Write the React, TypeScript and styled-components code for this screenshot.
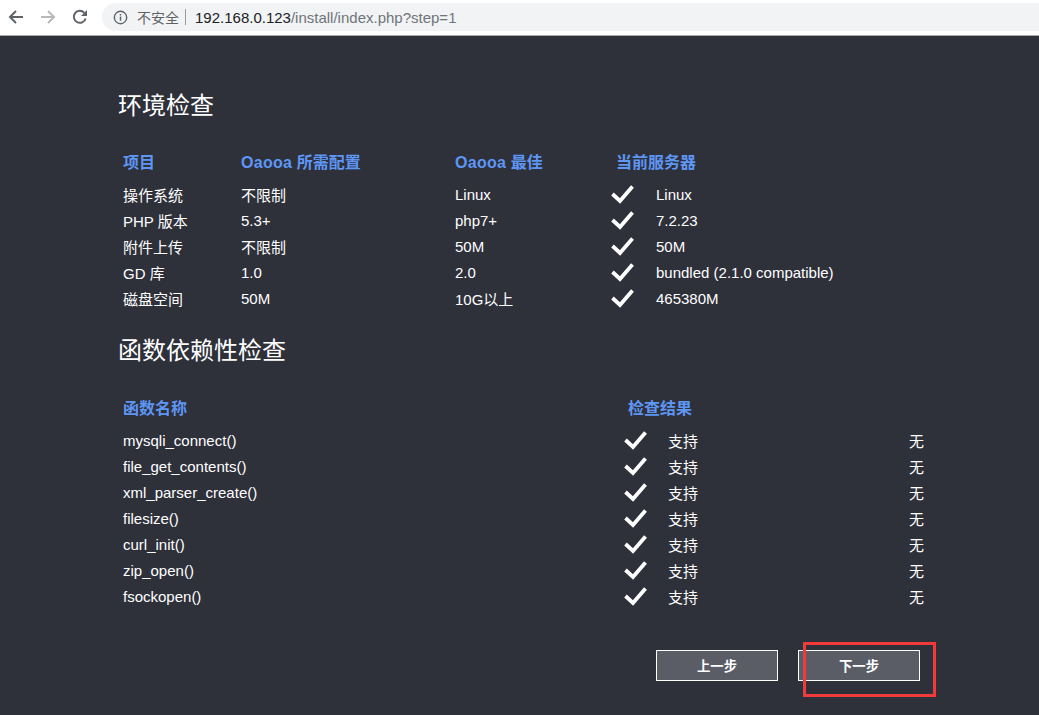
import { createGlobalStyle } from 'styled-components';
import styled from 'styled-components';

const ENV_ROWS = [
	['操作系统', '不限制', 'Linux', 'Linux'],
	['PHP 版本', '5.3+', 'php7+', '7.2.23'],
	['附件上传', '不限制', '50M', '50M'],
	['GD 库', '1.0', '2.0', 'bundled (2.1.0 compatible)'],
	['磁盘空间', '50M', '10G以上', '465380M'],
];

const FUNC_ROWS = [
	'mysqli_connect()',
	'file_get_contents()',
	'xml_parser_create()',
	'filesize()',
	'curl_init()',
	'zip_open()',
	'fsockopen()',
];

const Check = () => (
	<CheckIcon viewBox="0 0 24 20" aria-hidden="true">
		<path d="M2.5 10 L10 17 L22.5 2.5" fill="none" stroke="#fff" strokeWidth="3.8" />
	</CheckIcon>
);

const App = () => (
	<>
		<GlobalStyle />
		<BrowserBar>
			<NavIcon viewBox="0 0 16 16" $muted={false}>
				<path d="M15 8H2.5M8 2 2 8l6 6" fill="none" stroke="currentColor" strokeWidth="2" />
			</NavIcon>
			<NavIcon viewBox="0 0 16 16" $muted>
				<path d="M1 8h12.5M8 2l6 6-6 6" fill="none" stroke="currentColor" strokeWidth="2" />
			</NavIcon>
			<NavIcon viewBox="0 0 16 16" $muted={false}>
				<path
					d="M13.6 9.5A6 6 0 1 1 12.3 3.8"
					fill="none"
					stroke="currentColor"
					strokeWidth="2"
				/>
				<path d="M15 1v6H9z" fill="currentColor" />
			</NavIcon>
			<AddressBar>
				<InfoIcon viewBox="0 0 16 16">
					<circle cx="8" cy="8" r="6.6" fill="none" stroke="currentColor" strokeWidth="1.5" />
					<path d="M8 7v4.5M8 4.2v1.6" stroke="currentColor" strokeWidth="1.6" />
				</InfoIcon>
				<Insecure>不安全</Insecure>
				<Divider />
				<Host>192.168.0.123</Host>
				<UrlPath>/install/index.php?step=1</UrlPath>
			</AddressBar>
		</BrowserBar>

		<Page>
			<Heading>环境检查</Heading>
			<EnvHeader>
				<span>项目</span>
				<span>
					<Brand>Oaooa</Brand> 所需配置
				</span>
				<span>
					<Brand>Oaooa</Brand> 最佳
				</span>
				<span>当前服务器</span>
			</EnvHeader>
			{ENV_ROWS.map((row) => (
				<EnvRow key={row[0]}>
					<span>{row[0]}</span>
					<span>{row[1]}</span>
					<span>{row[2]}</span>
					<Check />
					<span>{row[3]}</span>
				</EnvRow>
			))}

			<SecondHeading>函数依赖性检查</SecondHeading>
			<FuncHeader>
				<span>函数名称</span>
				<span>检查结果</span>
			</FuncHeader>
			{FUNC_ROWS.map((name) => (
				<FuncRow key={name}>
					<span>{name}</span>
					<Check />
					<span>支持</span>
					<span>无</span>
				</FuncRow>
			))}

			<Actions>
				<ActionButton>上一步</ActionButton>
				<ActionButton>下一步</ActionButton>
			</Actions>
			<Annotation />
		</Page>
	</>
);

const GlobalStyle = createGlobalStyle`
	html, body {
		margin: 0;
		padding: 0;
		background: #2e303a;
	}

	body {
		font-family: "Liberation Sans", "Noto Sans CJK SC", sans-serif;
		font-size: 15px;
		color: #fff;
	}
`;

const BrowserBar = styled.div`
	display: flex;
	align-items: center;
	height: 34px;
	padding: 0 0 1px 8px;
	background: #fff;
	border-bottom: 1px solid #a9a9ab;
`;

const NavIcon = styled.svg<{ $muted: boolean }>`
	width: 16px;
	height: 16px;
	margin-right: 16px;
	flex: none;
	color: ${({ $muted }) => ($muted ? '#b9b9b9' : '#5f6368')};
`;

const AddressBar = styled.div`
	display: flex;
	align-items: center;
	flex: 1;
	height: 28px;
	margin-left: -2px;
	padding-left: 11px;
	background: #f1f3f4;
	border-radius: 14px 0 0 14px;
	font-size: 15px;
`;

const InfoIcon = styled.svg`
	width: 15px;
	height: 15px;
	margin-right: 9px;
	color: #5f6368;
`;

const Insecure = styled.span`
	color: #5f6368;
	font-size: 14px;
`;

const Divider = styled.span`
	width: 1px;
	height: 16px;
	margin: 0 9px 0 6px;
	background: #9a9a9a;
`;

const Host = styled.span`
	color: #202124;
`;

const UrlPath = styled.span`
	color: #70757a;
`;

const Page = styled.main`
	position: relative;
	box-sizing: border-box;
	height: 679px;
	padding: 55px 0 0 118px;
	background: #2e303a;
	overflow: hidden;
`;

const Heading = styled.h2`
	margin: 0;
	height: 30px;
	font-size: 24px;
	font-weight: 400;
	line-height: 30px;
`;

const SecondHeading = styled(Heading)`
	margin-top: 25px;
`;

const Brand = styled.span`
	letter-spacing: 0.3px;
`;

const EnvGrid = styled.div`
	display: grid;
	grid-template-columns: 118px 214px 155px 46px 1fr;
	width: 800px;
	padding-left: 5px;
	box-sizing: border-box;
`;

const EnvHeader = styled(EnvGrid)`
	grid-template-columns: 118px 214px 161px 1fr;
	height: 24px;
	margin-top: 28px;
	margin-bottom: 8px;
	align-items: center;
	color: #5e96f4;
	font-size: 16px;
	font-weight: 700;
`;

const EnvRow = styled(EnvGrid)`
	height: 26px;
	align-items: center;
`;

const CheckIcon = styled.svg`
	width: 24px;
	height: 20px;
	display: block;
`;

const FuncGrid = styled.div`
	display: grid;
	grid-template-columns: 500px 45px 241px 1fr;
	width: 830px;
	padding-left: 5px;
	box-sizing: border-box;
	align-items: center;
`;

const FuncHeader = styled(FuncGrid)`
	grid-template-columns: 505px 1fr;
	height: 24px;
	margin-top: 29px;
	margin-bottom: 8px;
	color: #5e96f4;
	font-size: 16px;
	font-weight: 700;
`;

const FuncRow = styled(FuncGrid)`
	height: 26px;
`;

const Actions = styled.div`
	display: flex;
	gap: 20px;
	margin-top: 41px;
	margin-left: 538px;
`;

const ActionButton = styled.button`
	width: 122px;
	height: 31px;
	padding: 0;
	background: #5a5c66;
	border: 1px solid #fff;
	color: #fff;
	font: 700 13.33px "Liberation Sans", "Noto Sans CJK SC", sans-serif;
`;

const Annotation = styled.div`
	position: absolute;
	left: 803px;
	top: 606px;
	width: 133px;
	height: 55px;
	box-sizing: border-box;
	border: 3px solid #f33a3a;
	pointer-events: none;
`;

export default App;
